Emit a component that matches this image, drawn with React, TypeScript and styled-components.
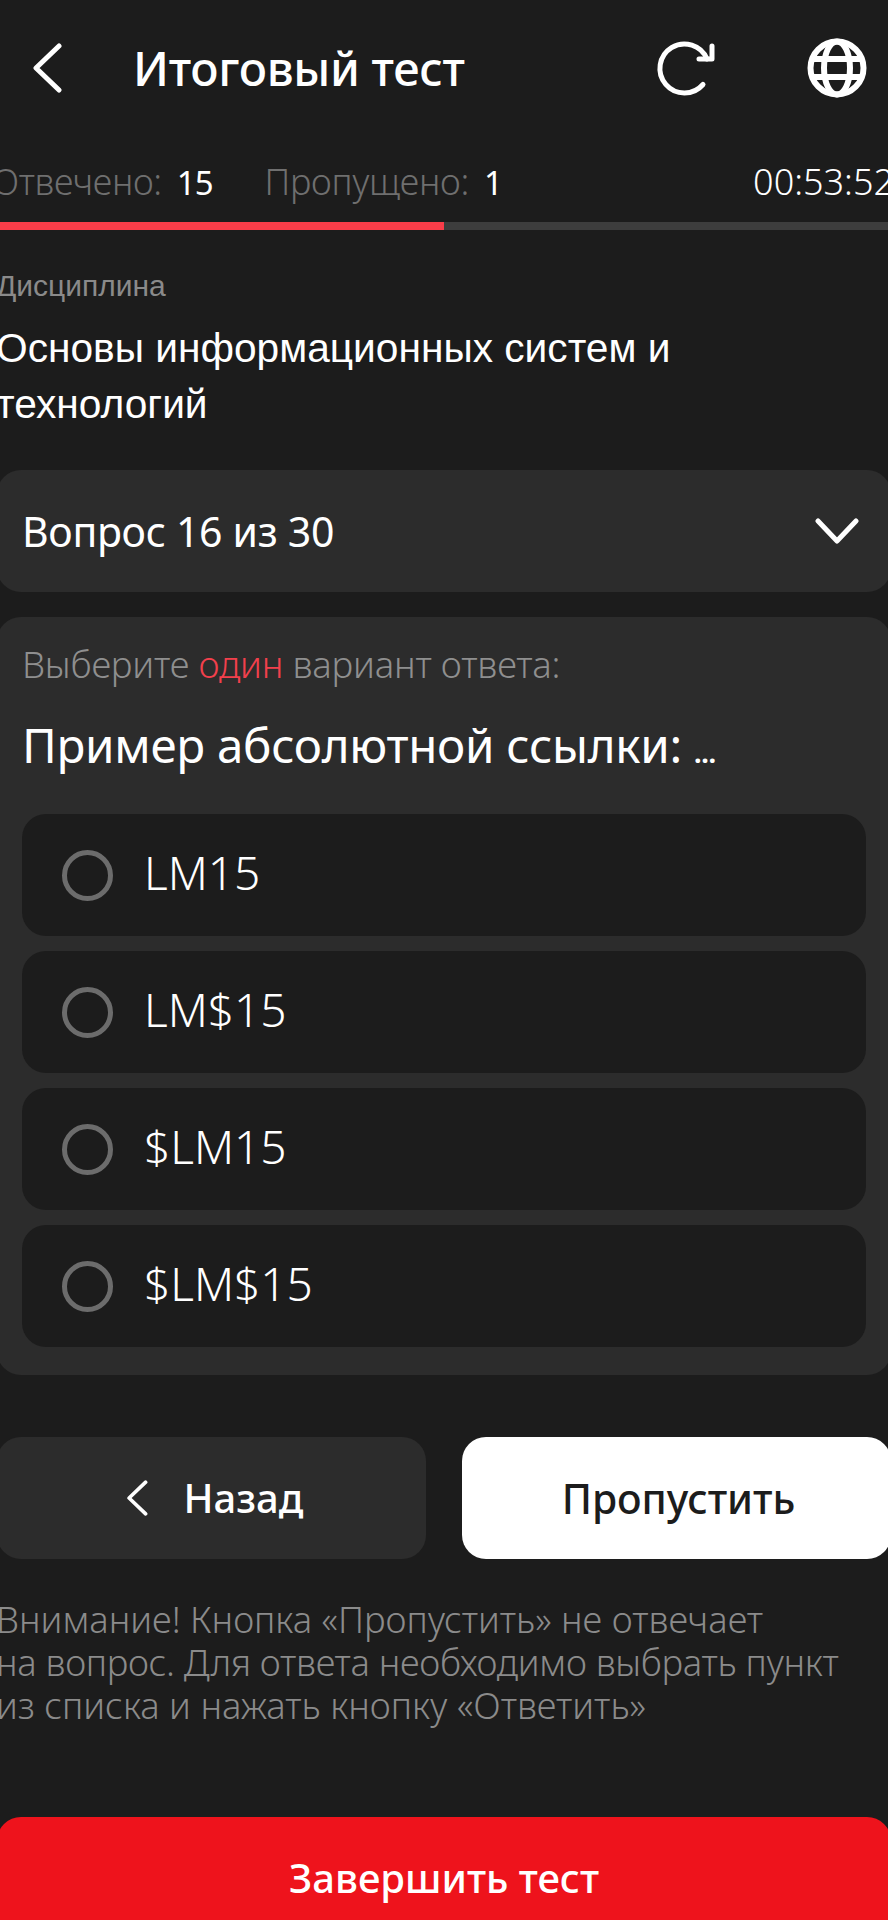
import React from "react";
import styled, { createGlobalStyle } from "styled-components";

const Global = createGlobalStyle`
  html, body { margin: 0; padding: 0; background: #1c1c1c; }
  body { width: 888px; height: 1920px; overflow: hidden; font-family: "Noto Sans", sans-serif; }
`;

const Page = styled.div`
  width: 888px;
  height: 1920px;
  overflow: hidden;
  background: #1c1c1c;
  color: #fff;
`;

const Inner = styled.div`
  width: 896px;
  margin-left: -4px;
  display: flex;
  flex-direction: column;
`;

const Header = styled.header`
  height: 136px;
  display: flex;
  align-items: center;
  padding: 0 25px 0 36px;
`;

const IconSlot = styled.span`
  display: flex;
  flex: none;
`;

const Title = styled.h1`
  margin: 0 0 0 71px;
  flex: 1;
  font: 500 47px/1 "Noto Sans", sans-serif;
  letter-spacing: -0.3px;
  color: #fff;
`;

const HeaderActions = styled.div`
  display: flex;
  align-items: center;
  gap: 92px;
`;

const Stats = styled.div`
  height: 86px;
  box-sizing: border-box;
  margin-left: -4px;
  padding-top: 6px;
  display: flex;
  align-items: center;
`;

const Stat = styled.span`
  font: 300 36px/1 "Noto Sans", sans-serif;
  color: #6f6f6f;
  margin-right: 52px;
  letter-spacing: -0.3px;
  & b { font-size: 33px; font-weight: 400; color: #fff; margin-left: 15px; letter-spacing: -1px; }
`;

const Timer = styled.span`
  margin-left: auto;
  margin-right: -2px;
  font: 300 36px/1 "Noto Sans", sans-serif;
  color: #fff;
`;

const Track = styled.div`
  height: 8px;
  background: #3d3d3d;
`;

const Fill = styled.div`
  height: 100%;
  background: #f93d49;
`;

const Discipline = styled.section`
  padding-top: 38px;
`;

const DisciplineLabel = styled.div`
  font: 400 30px/36px "Liberation Sans", sans-serif;
  color: #8a8a8a;
`;

const DisciplineName = styled.div`
  margin-top: 16px;
  width: 760px;
  font: 400 40.700px/56px "Liberation Sans", sans-serif;
  color: #fff;
`;

const Select = styled.div`
  margin: 38px 1px 0;
  height: 122px;
  border-radius: 24px;
  background: #2c2c2c;
  display: flex;
  align-items: center;
  justify-content: space-between;
  padding: 0 32px 0 25px;
  font: 400 41px/1 "Noto Sans", sans-serif;
  letter-spacing: -0.3px;
`;

const QuestionCard = styled.section`
  margin: 25px 1px 0;
  height: 758px;
  box-sizing: border-box;
  border-radius: 24px;
  background: #2c2c2c;
  padding: 26px 25px 0 25px;
`;

const Hint = styled.div`
  font: 300 36.500px/42px "Noto Sans", sans-serif;
  color: #8f8f8f;
  letter-spacing: -0.2px;
  & em { font-style: normal; color: #f2404c; }
`;

const Question = styled.h2`
  margin: 30px 0 0;
  font: 400 47.500px/60px "Noto Sans", sans-serif;
  color: #fff;
  letter-spacing: -0.3px;
`;

const Ellipsis = styled.span`
  font-size: 27px;
  font-weight: 700;
`;

const Options = styled.div`
  margin-top: 31px;
  display: flex;
  flex-direction: column;
  gap: 15px;
`;

const Option = styled.div`
  height: 122px;
  border-radius: 24px;
  background: #1c1c1c;
  display: flex;
  align-items: center;
  padding-left: 40px;
`;

const Radio = styled.span`
  width: 51px;
  height: 51px;
  box-sizing: border-box;
  border: 5px solid #6c6c6c;
  border-radius: 50%;
  flex: none;
`;

const OptionText = styled.span`
  margin: 0 0 6px 31px;
  font: 300 46px/1 "Noto Sans", sans-serif;
  color: #fff;
`;

const Actions = styled.div`
  margin: 62px 1px 0;
  display: grid;
  grid-template-columns: 429px 1fr;
  gap: 36px;
`;

const ActionButton = styled.button<{ $primary?: boolean }>`
  height: 122px;
  border: 0;
  border-radius: 24px;
  display: flex;
  align-items: center;
  justify-content: center;
  gap: 36px;
  padding: ${(p) => (p.$primary ? "0 0 0 4px" : "0 0 0 6px")};
  background: ${(p) => (p.$primary ? "#fff" : "#2c2c2c")};
  color: ${(p) => (p.$primary ? "#1c1c1c" : "#fff")};
  font: 500 ${(p) => (p.$primary ? "40.800px" : "40px")}/1 "Noto Sans", sans-serif;
`;

const Notice = styled.p`
  margin: 39px 0 0;
  font: 300 36.400px/43px "Noto Sans", sans-serif;
  color: #8b8b8b;
`;

const NoticeLine = styled.span<{ $tight?: boolean }>`
  display: block;
  letter-spacing: ${(p) => (p.$tight ? "-0.3px" : "0")};
`;

const Finish = styled.button`
  margin: 90px 1px 0;
  height: 130px;
  border: 0;
  border-radius: 24px 24px 0 0;
  background: #ee131c;
  color: #fff;
  font: 500 40px/1 "Noto Sans", sans-serif;
  padding: 0 0 8px;
`;

const Chevron = ({ w, h, sw }: { w: number; h: number; sw: number }) => (
  <svg width={w} height={h} viewBox="0 0 30 50" fill="none" stroke="#fff" strokeWidth={sw} strokeLinecap="round" strokeLinejoin="round">
    <path d="M27 3 4 25l23 22" />
  </svg>
);

const Reload = () => (
  <svg width="60" height="60" viewBox="0 0 60 60" fill="none" stroke="#fff" strokeWidth="5" strokeLinecap="round" strokeLinejoin="round">
    <path d="M48 46.500A24.500 24.500 0 1 1 52 21" />
    <path d="M57 8v13H44" />
  </svg>
);

const Globe = () => (
  <svg width="60" height="60" viewBox="0 0 60 60" fill="none" stroke="#fff" strokeWidth="6">
    <circle cx="30" cy="30" r="26.500" />
    <ellipse cx="30" cy="30" rx="13" ry="26.500" />
    <path d="M4 21h52M4 39h52" />
  </svg>
);

const Down = () => (
  <svg width="44" height="26" viewBox="0 0 44 26" fill="none" stroke="#fff" strokeWidth="5" strokeLinecap="round" strokeLinejoin="round">
    <path d="M3 3l19 20L41 3" />
  </svg>
);

const options = ["LM15", "LM$15", "$LM15", "$LM$15"];

export default function App() {
  return (
    <Page>
      <Global />
      <Inner>
        <Header>
          <IconSlot>
            <Chevron w={30} h={50} sw={5} />
          </IconSlot>
          <Title>Итоговый тест</Title>
          <HeaderActions>
            <IconSlot><Reload /></IconSlot>
            <IconSlot><Globe /></IconSlot>
          </HeaderActions>
        </Header>
        <Stats>
          <Stat>Отвечено:<b>15</b></Stat>
          <Stat>Пропущено:<b>1</b></Stat>
          <Timer>00:53:52</Timer>
        </Stats>
        <Track>
          <Fill style={{ width: `${(15 / 30) * 100}%` }} />
        </Track>
        <Discipline>
          <DisciplineLabel>Дисциплина</DisciplineLabel>
          <DisciplineName>Основы информационных систем и технологий</DisciplineName>
        </Discipline>
        <Select>
          Вопрос 16 из 30
          <Down />
        </Select>
        <QuestionCard>
          <Hint>Выберите <em>один</em> вариант ответа:</Hint>
          <Question>Пример абсолютной ссылки: <Ellipsis>...</Ellipsis></Question>
          <Options>
            {options.map((o) => (
              <Option key={o}>
                <Radio />
                <OptionText>{o}</OptionText>
              </Option>
            ))}
          </Options>
        </QuestionCard>
        <Actions>
          <ActionButton>
            <Chevron w={22} h={36} sw={5} />
            Назад
          </ActionButton>
          <ActionButton $primary>Пропустить</ActionButton>
        </Actions>
        <Notice>
          <NoticeLine>Внимание! Кнопка «Пропустить» не отвечает</NoticeLine>
          <NoticeLine $tight>на вопрос. Для ответа необходимо выбрать пункт</NoticeLine>
          <NoticeLine>из списка и нажать кнопку «Ответить»</NoticeLine>
        </Notice>
        <Finish>Завершить тест</Finish>
      </Inner>
    </Page>
  );
}
